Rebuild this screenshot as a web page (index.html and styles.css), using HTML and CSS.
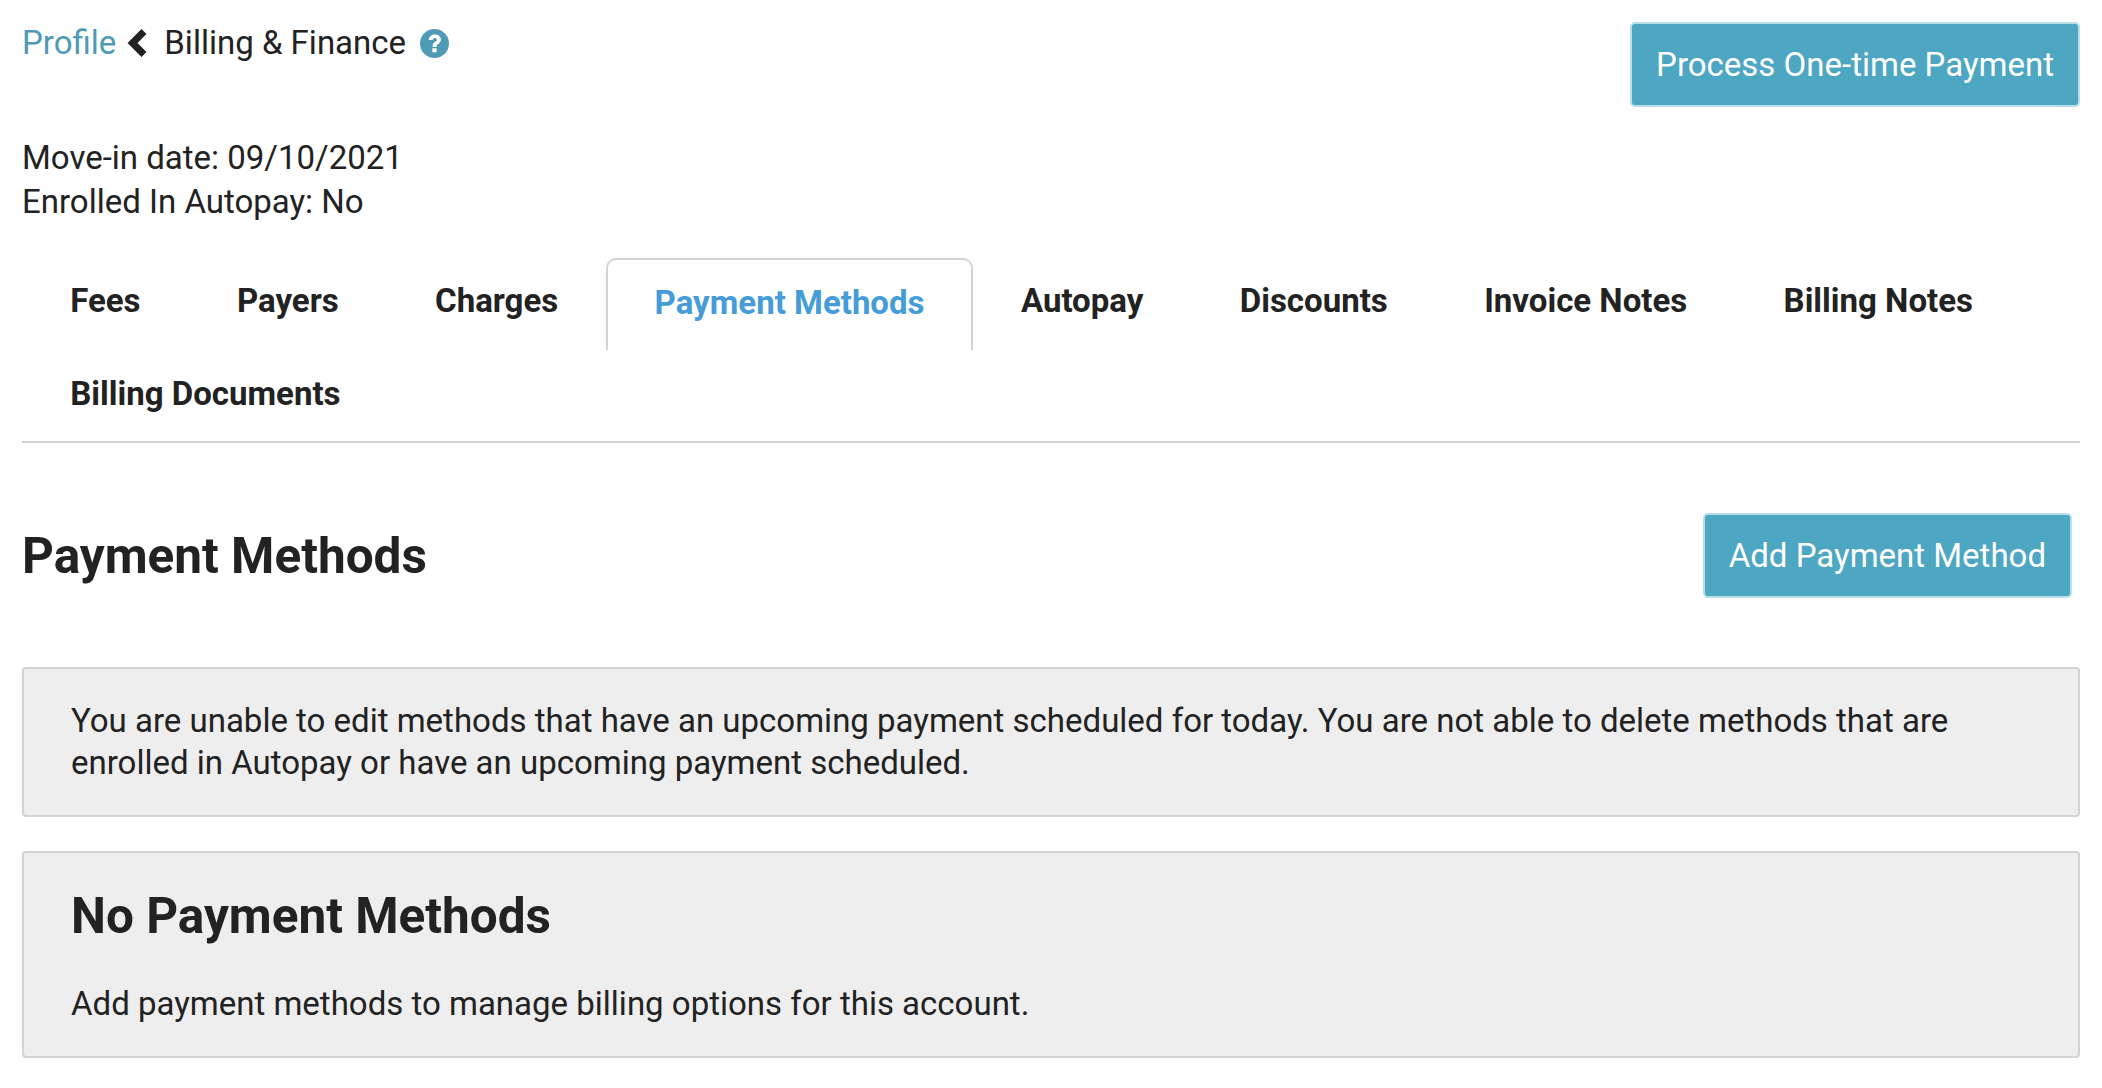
FILE: index.html
```html
<!DOCTYPE html>
<html lang="en">
<head>
<meta charset="utf-8">
<title>Billing &amp; Finance</title>
<link rel="stylesheet" href="styles.css">
</head>
<body>
<main class="page">
  <header class="top">
    <div class="crumbs">
      <a class="crumb-link" href="#">Profile</a>
      <svg class="chev" viewBox="0 0 20 30" aria-hidden="true"><path d="M17 3.500L5.500 15 17 26.500"/></svg>
      <span class="crumb-title">Billing &amp; Finance</span>
      <svg class="help" viewBox="0 0 28 28" aria-hidden="true"><circle cx="14" cy="14" r="14"/><path class="help-q" d="M8.300 10.600C8.700 7.100 11.100 5.200 14.400 5.200c3.400 0 5.800 2 5.800 4.900 0 2.200-1.200 3.400-2.800 4.400-1.100.7-1.400 1.200-1.400 2.200v.6h-3.800v-.9c0-2 .8-3.100 2.400-4 1.100-.7 1.600-1.200 1.600-2.100 0-1-.7-1.600-1.800-1.600-1.200 0-1.900.7-2.100 2zM11.900 18.600h4.200v3.900h-4.200z"/></svg>
    </div>
    <a class="btn" href="#">Process One-time Payment</a>
  </header>

  <section class="meta">
    <div>Move-in date: 09/10/2021</div>
    <div>Enrolled In Autopay: No</div>
  </section>

  <nav class="tabs">
    <a class="tab" href="#">Fees</a>
    <a class="tab" href="#">Payers</a>
    <a class="tab" href="#">Charges</a>
    <a class="tab tab-active" href="#">Payment Methods</a>
    <a class="tab" href="#">Autopay</a>
    <a class="tab" href="#">Discounts</a>
    <a class="tab" href="#">Invoice Notes</a>
    <a class="tab" href="#">Billing Notes</a>
    <a class="tab tab-wrapped" href="#">Billing Documents</a>
  </nav>

  <section class="section-head">
    <h1 class="title">Payment Methods</h1>
    <a class="btn" href="#">Add Payment Method</a>
  </section>

  <div class="panel panel-note">You are unable to edit methods that have an upcoming payment scheduled for today. You are not able to delete methods that are enrolled in Autopay or have an upcoming payment scheduled.</div>

  <div class="panel panel-empty">
    <h2 class="title">No Payment Methods</h2>
    <p class="empty-text">Add payment methods to manage billing options for this account.</p>
  </div>
</main>
</body>
</html>
```

FILE: styles.css
```css
* { box-sizing: border-box; }
html, body { margin: 0; background: #fff; }
body {
  font-family: Roboto, "Liberation Sans", sans-serif;
  font-size: 33px;
  line-height: 44px;
  color: #222;
}
a { text-decoration: none; }
.page { padding: 22px 22px 0; }
.top { display: flex; justify-content: space-between; align-items: flex-start; }
.crumbs { display: flex; align-items: center; height: 42px; }
.crumb-link { color: #4f9ab5; }
.chev { width: 20px; height: 30px; margin: 0 17px 0 11px; fill: none; stroke: #222; stroke-width: 7; }
.help { width: 29px; height: 29px; margin-left: 14px; fill: #4f9ab5; }
.help-q { fill: #fff; }
.btn {
  display: block;
  padding: 19px 24px 18px;
  color: #fff;
  background: #4da6c2;
  border: 2px solid #b7dfe9;
  border-radius: 5px;
  white-space: nowrap;
}
.meta { margin-top: 29px; }
.tabs {
  display: flex;
  flex-wrap: wrap;
  margin-top: 34px;
  border-bottom: 2px solid #d3d3d3;
}
.tab {
  height: 92px;
  padding: 21px 46.2px 0;
  font-weight: 700;
  color: #222;
  border-left: 2px solid transparent;
  border-right: 2px solid transparent;
}
.tab-wrapped { height: 91px; padding-top: 22px; }
.tab-active {
  color: #459cd8;
  border: 2px solid #d3d3d3;
  border-bottom: 0;
  border-radius: 10px 10px 0 0;
}
.section-head {
  display: flex;
  justify-content: space-between;
  align-items: center;
  margin-top: 70px;
  padding-right: 8px;
}
.title { margin: 0; font-size: 49.5px; line-height: 60px; font-weight: 700; }
.panel {
  background: #eee;
  border: 2px solid #d3d3d3;
  border-radius: 4px;
  padding: 31px 47px;
  line-height: 42px;
}
.panel-note { margin-top: 69px; }
.panel-empty { margin-top: 34px; padding: 33px 47px 31px; }
.empty-text { margin: 37px 0 0; }
```
